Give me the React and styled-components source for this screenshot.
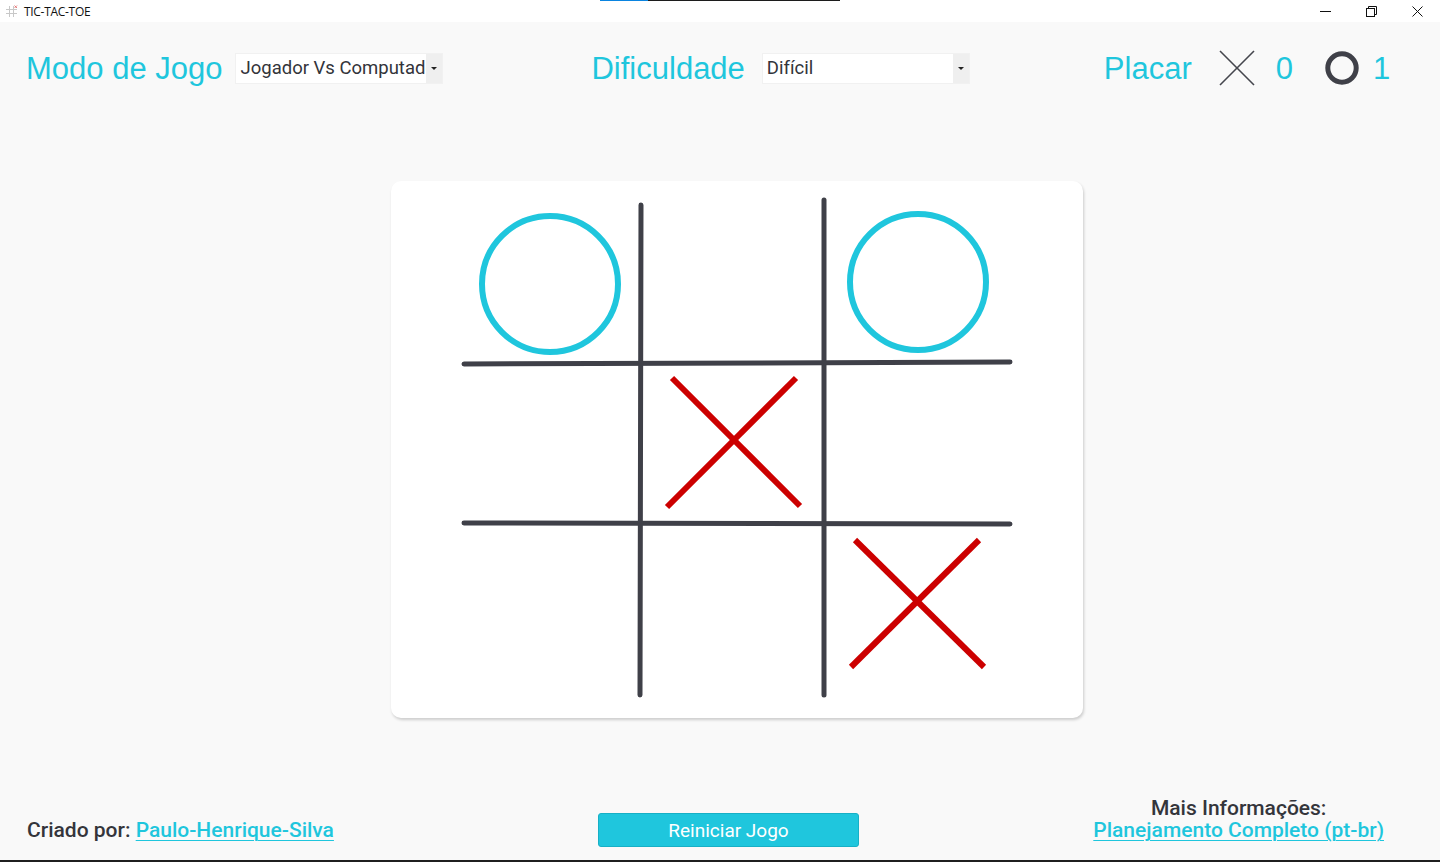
import styled, { createGlobalStyle } from "styled-components";

const GlobalStyle = createGlobalStyle`
    html, body {
        margin: 0;
        padding: 0;
        background: #f9f9f9;
    }
    * {
        box-sizing: border-box;
    }
`;

const CYAN = "#1fc6dd";
const DARK = "#3f4048";

const Window = styled.div`
    position: relative;
    width: 1440px;
    height: 862px;
    display: flex;
    flex-direction: column;
    background: #f9f9f9;
    border-bottom: 2px solid #1f1f1f;
    font-family: "Liberation Sans", Arial, sans-serif;
    overflow: hidden;
`;

const DragLine = styled.div`
    position: absolute;
    top: 0;
    left: 600px;
    width: 240px;
    height: 1px;
    background: linear-gradient(to right, #0a84e0 0 48px, #1c1c1c 48px);
`;

const TitleBar = styled.div`
    height: 22px;
    background: #ffffff;
    display: flex;
    align-items: center;
    padding-left: 5px;
`;

const Title = styled.span`
    margin-left: 6px;
    font-family: "Open Sans", "Noto Sans", sans-serif;
    font-size: 12px;
    letter-spacing: -0.3px;
    color: #111;
`;

const Controls = styled.div`
    margin-left: auto;
    display: flex;
    height: 22px;
`;

const ControlBtn = styled.div`
    width: 46px;
    height: 22px;
    display: flex;
    align-items: center;
    justify-content: center;
`;

const Header = styled.header`
    height: 92px;
    display: flex;
    align-items: center;
    padding: 0 0 0 26px;
`;

const Group = styled.div`
    display: flex;
    align-items: center;
    flex-shrink: 0;
    margin-left: ${(p) => p.$offset || 0}px;
`;

const Label = styled.h2`
    margin: 0 ${(p) => p.$gap}px 0 0;
    font-family: "Liberation Sans", Arial, sans-serif;
    font-weight: 400;
    font-size: 31px;
    color: ${CYAN};
    line-height: 1;
    white-space: nowrap;
`;

const Select = styled.div`
    width: 208px;
    height: 31px;
    display: flex;
    flex-shrink: 0;
    background: #ffffff;
    border: 1px solid #f1f1f1;
`;

const SelectText = styled.span`
    flex: 1;
    overflow: hidden;
    white-space: nowrap;
    padding-left: 4px;
    font-family: Roboto, "Noto Sans", sans-serif;
    font-size: 18.5px;
    line-height: 29px;
    color: #33343a;
`;

const SelectArrow = styled.span`
    width: 16px;
    background: #efefef;
    display: flex;
    align-items: center;
    justify-content: center;

    &::after {
        content: "";
        border-left: 3px solid transparent;
        border-right: 3px solid transparent;
        border-top: 3px solid #222;
    }
`;

const Score = styled.span`
    font-family: "Liberation Sans", Arial, sans-serif;
    font-size: 31px;
    color: ${CYAN};
    margin: 0 ${(p) => p.$right || 0}px 0 ${(p) => p.$left || 0}px;
    line-height: 1;
`;

const Main = styled.main`
    flex: 1;
    display: flex;
    justify-content: center;
    align-items: flex-start;
    padding: 67px 0 0 34px;
`;

const BoardCard = styled.div`
    width: 692px;
    height: 537px;
    background: #ffffff;
    border-radius: 10px;
    box-shadow: 1px 2px 3px rgba(0, 0, 0, 0.18);
`;

const Footer = styled.footer`
    display: grid;
    grid-template-columns: 571px 261px 1fr;
    align-items: end;
    padding: 0 56px 19px 27px;
`;

const Credit = styled.p`
    margin: 0;
    font-family: Roboto, "Noto Sans", sans-serif;
    font-weight: 500;
    font-size: 21px;
    line-height: 22px;
    color: #34353b;
    white-space: nowrap;
`;

const Link = styled.a`
    color: ${CYAN};
    text-decoration: underline;
    text-underline-offset: 3px;
    text-decoration-thickness: 1px;
`;

const RestartButton = styled.button`
    height: 34px;
    margin-bottom: -6px;
    background: ${CYAN};
    border: 1px solid #17b0c6;
    border-radius: 3px;
    color: #ffffff;
    font-family: Roboto, "Noto Sans", sans-serif;
    font-size: 19px;
    cursor: pointer;
`;

const MoreInfo = styled.div`
    justify-self: end;
    text-align: center;
    font-family: Roboto, "Noto Sans", sans-serif;
    font-weight: 500;
    font-size: 21px;
    line-height: 22px;
    color: #34353b;
    white-space: nowrap;
`;

function AppIcon() {
    return (
        <svg width="13" height="13" viewBox="0 0 13 13">
            <g stroke="#c8c8c8" strokeWidth="1">
                <line x1="4.5" y1="1" x2="4.5" y2="12" />
                <line x1="8.5" y1="1" x2="8.5" y2="12" />
                <line x1="1" y1="4.5" x2="12" y2="4.5" />
                <line x1="1" y1="8.5" x2="12" y2="8.5" />
            </g>
            <g stroke="#e06060" strokeWidth="0.8">
                <line x1="9.5" y1="0.5" x2="12" y2="3" />
                <line x1="12" y1="0.5" x2="9.5" y2="3" />
            </g>
        </svg>
    );
}

function WindowControls() {
    return (
        <Controls>
            <ControlBtn>
                <svg width="11" height="11" viewBox="0 0 11 11">
                    <line x1="0" y1="5.5" x2="11" y2="5.5" stroke="#111" />
                </svg>
            </ControlBtn>
            <ControlBtn>
                <svg width="11" height="11" viewBox="0 0 11 11" fill="none" stroke="#111">
                    <rect x="0.5" y="2.5" width="8" height="8" />
                    <path d="M2.5 2.5 V0.5 H10.5 V8.5 H8.5" />
                </svg>
            </ControlBtn>
            <ControlBtn>
                <svg width="11" height="11" viewBox="0 0 11 11" stroke="#111">
                    <line x1="0.5" y1="0.5" x2="10.5" y2="10.5" />
                    <line x1="10.5" y1="0.5" x2="0.5" y2="10.5" />
                </svg>
            </ControlBtn>
        </Controls>
    );
}

function ScoreX() {
    return (
        <svg width="38" height="38" viewBox="0 0 38 38">
            <g stroke="#45464d" strokeWidth="1.6">
                <line x1="2" y1="2" x2="36" y2="36" />
                <line x1="36" y1="2" x2="2" y2="36" />
            </g>
        </svg>
    );
}

function ScoreO() {
    return (
        <svg width="34" height="34" viewBox="0 0 34 34">
            <circle cx="17" cy="17" r="14.2" fill="none" stroke={DARK} strokeWidth="5" />
        </svg>
    );
}

const marks = [
    { type: "o", cx: 159, cy: 103 },
    { type: "o", cx: 527, cy: 101 },
    { type: "x", a: [281, 197, 409, 325], b: [405, 197, 276, 326] },
    { type: "x", a: [464, 359, 593, 486], b: [588, 359, 460, 486] },
];

function Board() {
    return (
        <BoardCard>
            <svg width="692" height="537" viewBox="0 0 692 537">
                <g stroke={DARK} strokeWidth="5" strokeLinecap="round" fill="none">
                    <path d="M250 24 L249 514" />
                    <path d="M433 19 L433 514" />
                    <path d="M73 183 L619 181" />
                    <path d="M73 342 L619 343" />
                </g>
                {marks.map((m, i) =>
                    m.type === "o" ? (
                        <circle
                            key={i}
                            cx={m.cx}
                            cy={m.cy}
                            r="68"
                            fill="none"
                            stroke={CYAN}
                            strokeWidth="6"
                        />
                    ) : (
                        <g key={i} stroke="#cc0000" strokeWidth="6">
                            <line x1={m.a[0]} y1={m.a[1]} x2={m.a[2]} y2={m.a[3]} />
                            <line x1={m.b[0]} y1={m.b[1]} x2={m.b[2]} y2={m.b[3]} />
                        </g>
                    )
                )}
            </svg>
        </BoardCard>
    );
}

function App() {
    return (
        <>
            <GlobalStyle />
            <Window>
                <DragLine />
                <TitleBar>
                    <AppIcon />
                    <Title>TIC-TAC-TOE</Title>
                    <WindowControls />
                </TitleBar>

                <Header>
                    <Group>
                        <Label $gap={13}>Modo de Jogo</Label>
                        <Select>
                            <SelectText>Jogador Vs Computador</SelectText>
                            <SelectArrow />
                        </Select>
                    </Group>
                    <Group $offset={148}>
                        <Label $gap={17}>Dificuldade</Label>
                        <Select>
                            <SelectText>Difícil</SelectText>
                            <SelectArrow />
                        </Select>
                    </Group>
                    <Group $offset={134}>
                        <Label $gap={26}>Placar</Label>
                        <ScoreX />
                        <Score $left={20} $right={32}>0</Score>
                        <ScoreO />
                        <Score $left={14}>1</Score>
                    </Group>
                </Header>

                <Main>
                    <Board />
                </Main>

                <Footer>
                    <Credit>
                        Criado por: <Link href="#">Paulo-Henrique-Silva</Link>
                    </Credit>
                    <RestartButton>Reiniciar Jogo</RestartButton>
                    <MoreInfo>
                        Mais Informações:
                        <br />
                        <Link href="#">Planejamento Completo (pt-br)</Link>
                    </MoreInfo>
                </Footer>
            </Window>
        </>
    );
}

export default App;
